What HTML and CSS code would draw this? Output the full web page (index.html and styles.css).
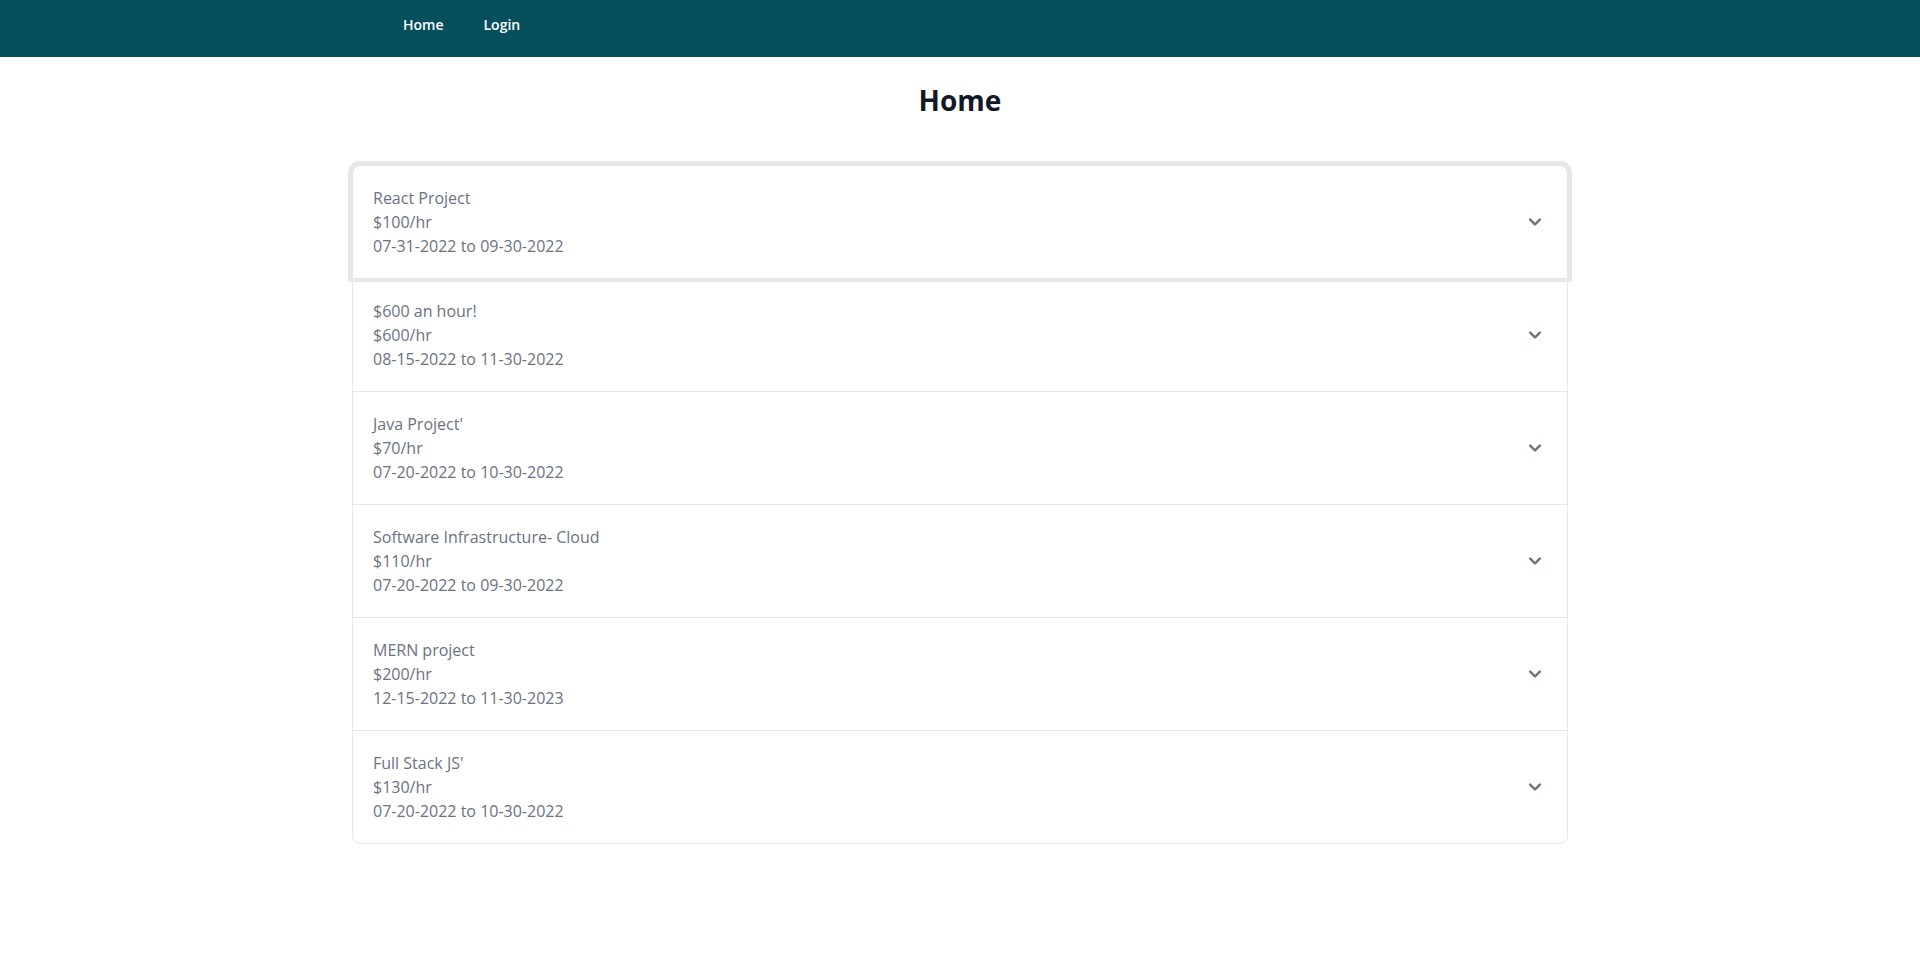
FILE: index.html
```html
<!DOCTYPE html>
<html lang="en">
<head>
<meta charset="utf-8">
<title>Home</title>
<link rel="stylesheet" href="styles.css">
</head>
<body>
<nav class="navbar">
  <div class="nav-links">
    <a class="nav-link" href="#">Home</a>
    <a class="nav-link" href="#">Login</a>
  </div>
</nav>
<main class="main">
  <h1 class="title">Home</h1>
  <div class="accordion">
    <div class="acc-row acc-first acc-focus">
      <div class="acc-text"><div>React Project</div><div>$100/hr</div><div>07-31-2022 to 09-30-2022</div></div>
      <svg class="chev" viewBox="0 0 20 20" fill="currentColor"><path fill-rule="evenodd" d="M5.293 7.293a1 1 0 011.414 0L10 10.586l3.293-3.293a1 1 0 111.414 1.414l-4 4a1 1 0 01-1.414 0l-4-4a1 1 0 010-1.414z" clip-rule="evenodd"/></svg>
    </div>
    <div class="acc-row">
      <div class="acc-text"><div>$600 an hour!</div><div>$600/hr</div><div>08-15-2022 to 11-30-2022</div></div>
      <svg class="chev" viewBox="0 0 20 20" fill="currentColor"><path fill-rule="evenodd" d="M5.293 7.293a1 1 0 011.414 0L10 10.586l3.293-3.293a1 1 0 111.414 1.414l-4 4a1 1 0 01-1.414 0l-4-4a1 1 0 010-1.414z" clip-rule="evenodd"/></svg>
    </div>
    <div class="acc-row">
      <div class="acc-text"><div>Java Project'</div><div>$70/hr</div><div>07-20-2022 to 10-30-2022</div></div>
      <svg class="chev" viewBox="0 0 20 20" fill="currentColor"><path fill-rule="evenodd" d="M5.293 7.293a1 1 0 011.414 0L10 10.586l3.293-3.293a1 1 0 111.414 1.414l-4 4a1 1 0 01-1.414 0l-4-4a1 1 0 010-1.414z" clip-rule="evenodd"/></svg>
    </div>
    <div class="acc-row">
      <div class="acc-text"><div>Software Infrastructure- Cloud</div><div>$110/hr</div><div>07-20-2022 to 09-30-2022</div></div>
      <svg class="chev" viewBox="0 0 20 20" fill="currentColor"><path fill-rule="evenodd" d="M5.293 7.293a1 1 0 011.414 0L10 10.586l3.293-3.293a1 1 0 111.414 1.414l-4 4a1 1 0 01-1.414 0l-4-4a1 1 0 010-1.414z" clip-rule="evenodd"/></svg>
    </div>
    <div class="acc-row">
      <div class="acc-text"><div>MERN project</div><div>$200/hr</div><div>12-15-2022 to 11-30-2023</div></div>
      <svg class="chev" viewBox="0 0 20 20" fill="currentColor"><path fill-rule="evenodd" d="M5.293 7.293a1 1 0 011.414 0L10 10.586l3.293-3.293a1 1 0 111.414 1.414l-4 4a1 1 0 01-1.414 0l-4-4a1 1 0 010-1.414z" clip-rule="evenodd"/></svg>
    </div>
    <div class="acc-row acc-last">
      <div class="acc-text"><div>Full Stack JS'</div><div>$130/hr</div><div>07-20-2022 to 10-30-2022</div></div>
      <svg class="chev" viewBox="0 0 20 20" fill="currentColor"><path fill-rule="evenodd" d="M5.293 7.293a1 1 0 011.414 0L10 10.586l3.293-3.293a1 1 0 111.414 1.414l-4 4a1 1 0 01-1.414 0l-4-4a1 1 0 010-1.414z" clip-rule="evenodd"/></svg>
    </div>
  </div>
</main>
</body>
</html>
```
FILE: styles.css
```css
* { box-sizing: border-box; }
html, body { margin: 0; padding: 0; background: #ffffff; }
body { font-family: "Open Sans", "Noto Sans", sans-serif; }

.navbar {
  height: 57px;
  background: #064f5c;
  display: flex;
  align-items: center;
}
.nav-links {
  display: flex;
  gap: 40px;
  padding-left: 403px;
  padding-bottom: 9px;
}
.nav-link {
  color: #ffffff;
  text-decoration: none;
  font-size: 14px;
  font-weight: 600;
}

.main {
  width: 1216px;
  margin: 0 auto;
}
.title {
  margin: 0;
  padding-top: 25px;
  height: 108px;
  text-align: center;
  font-size: 28px;
  line-height: 36px;
  font-weight: 700;
  color: #111827;
}

.accordion { display: flex; flex-direction: column; }
.acc-row {
  position: relative;
  display: flex;
  align-items: center;
  justify-content: space-between;
  padding: 20px;
  border: 1px solid #e5e7eb;
  border-bottom: 0;
  color: #6b7280;
  font-size: 16px;
  line-height: 24px;
  background: #ffffff;
}
.acc-first { border-radius: 8px 8px 0 0; }
.acc-last { border-bottom: 1px solid #e5e7eb; border-radius: 0 0 8px 8px; }
.acc-focus { z-index: 1; box-shadow: 0 0 0 4px #e5e7eb; }
.chev { width: 24px; height: 24px; color: #6b7280; flex-shrink: 0; }
```
